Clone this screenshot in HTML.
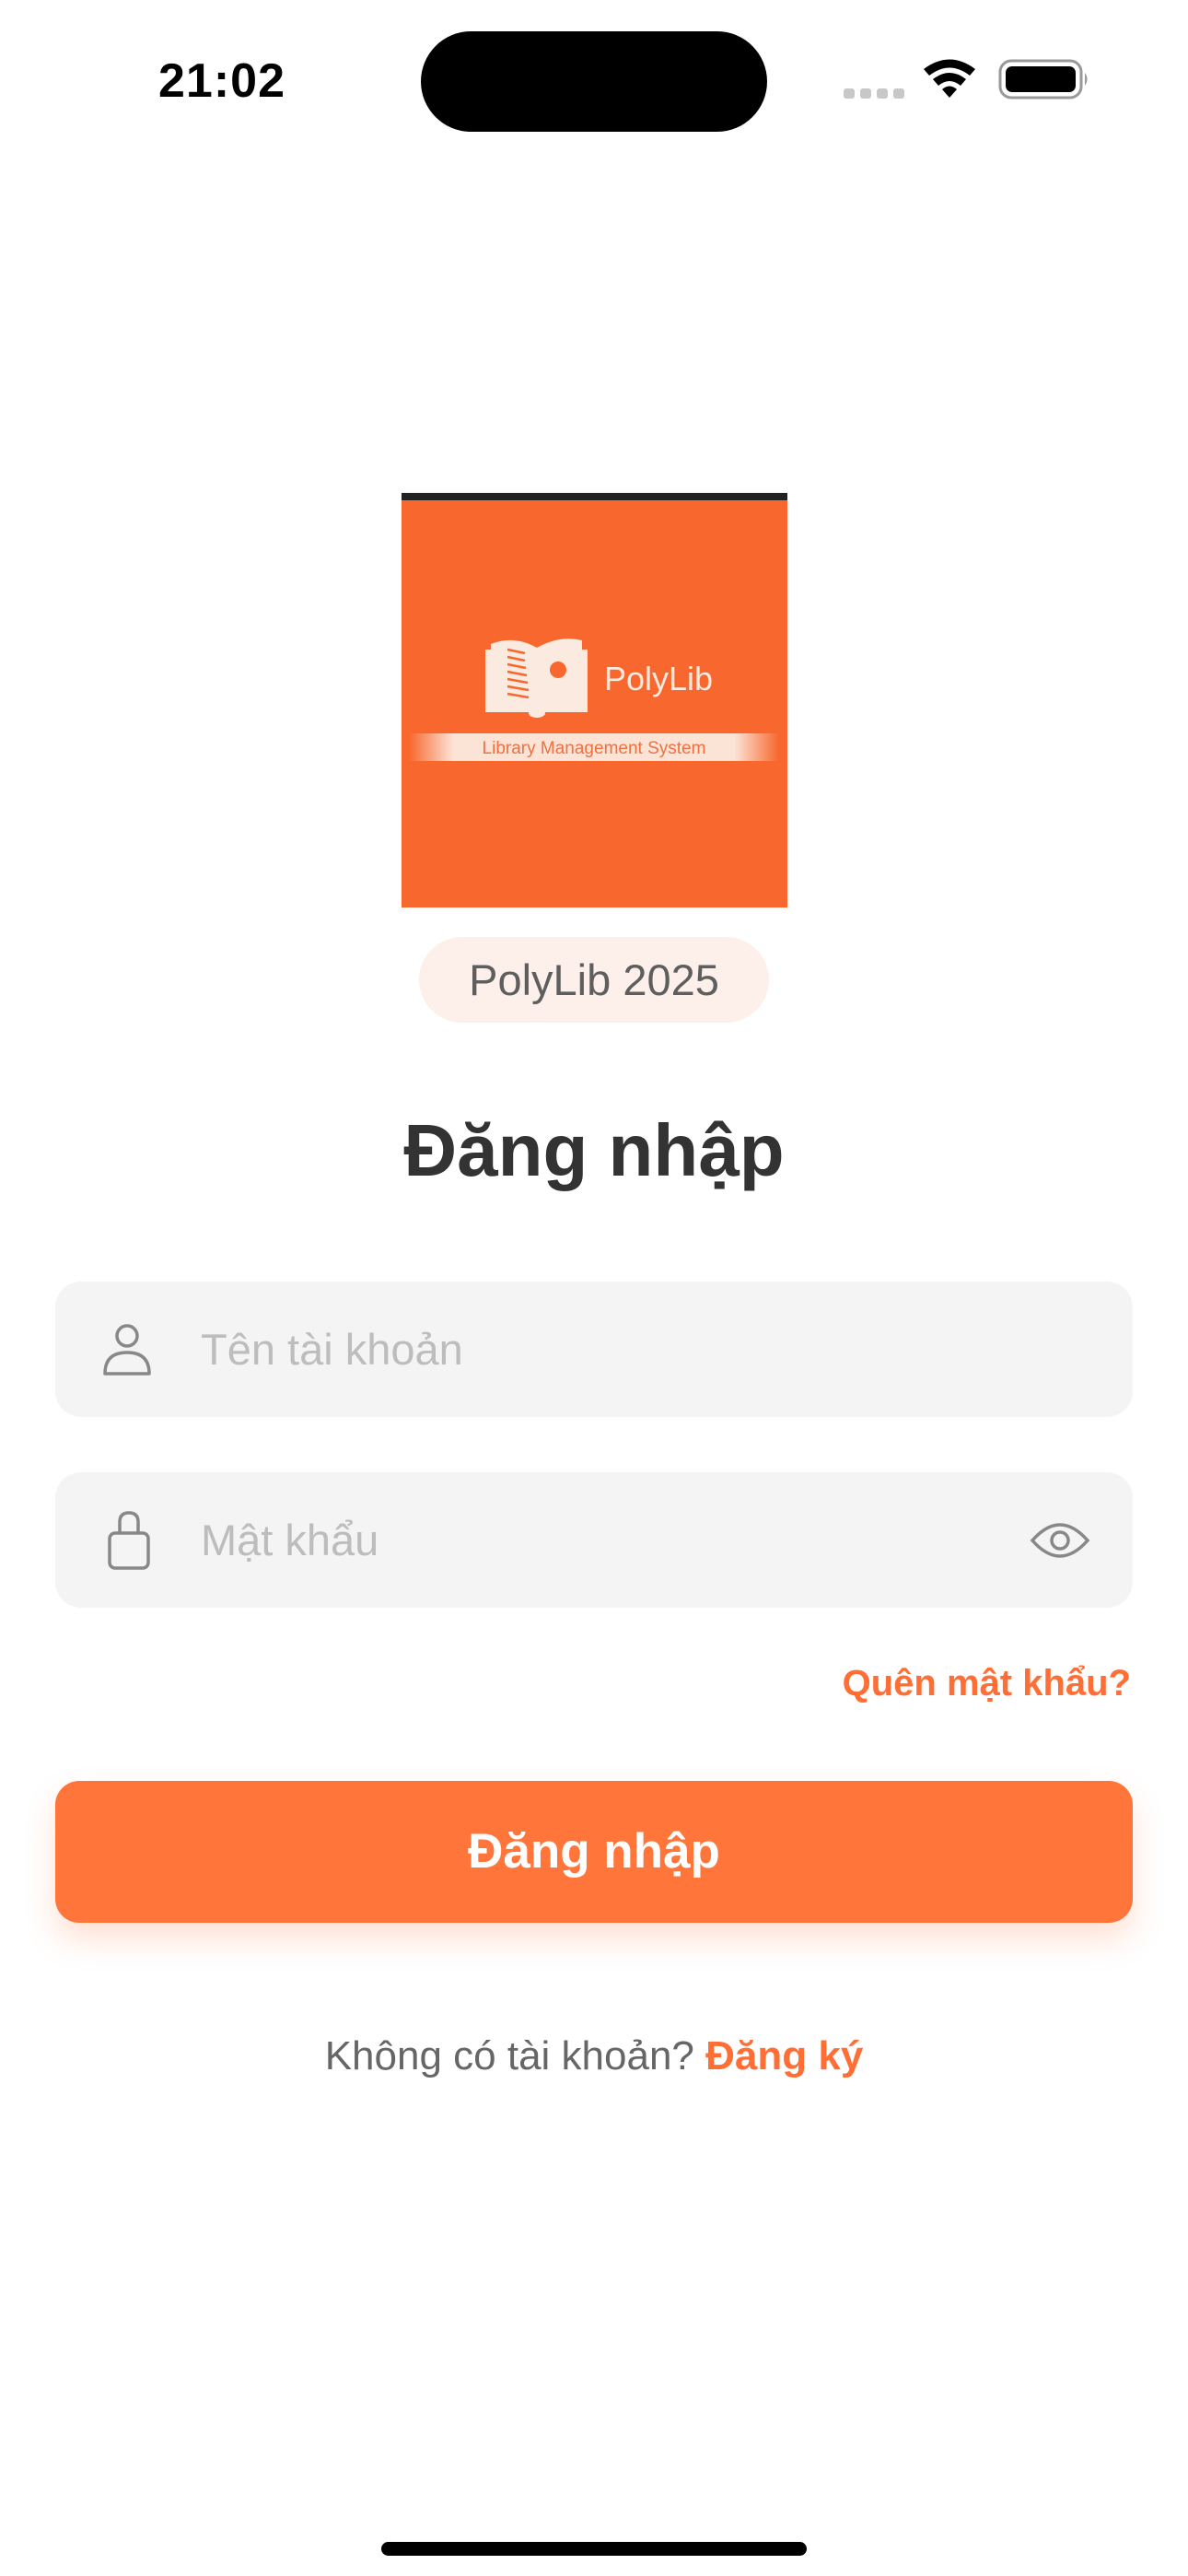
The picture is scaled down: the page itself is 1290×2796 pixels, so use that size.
<!DOCTYPE html>
<html><head><meta charset="utf-8"><style>
*{margin:0;padding:0;box-sizing:border-box}
body{width:1290px;height:2796px;background:#fff;position:relative;overflow:hidden;font-family:"Liberation Sans",sans-serif}
.abs{position:absolute}
.time{left:172px;top:58px;font-size:52px;font-weight:bold;color:#000;letter-spacing:1px}
.island{left:457px;top:34px;width:376px;height:109px;border-radius:55px;background:#000}
.logo{left:436px;top:535px;width:419px;height:450px;background:#f8672d;border-top:8px solid #222}
.pill{left:455px;top:1017px;width:380px;height:93px;border-radius:47px;background:#fdf0eb;color:#5e5e5e;font-size:47px;text-align:center;line-height:93px}
.title{left:0;width:1290px;top:1203px;text-align:center;font-size:80px;font-weight:bold;color:#333}
.inp{left:60px;width:1170px;height:147px;border-radius:28px;background:#f4f4f4}
.ph{position:absolute;left:158px;top:0;line-height:147px;font-size:47px;color:#bdbdbd}
.forgot{right:62px;top:1805px;font-size:40px;color:#ff6f35;font-weight:bold}
.btn{left:60px;top:1933px;width:1170px;height:154px;border-radius:26px;background:#ff753a;color:#fff;font-size:53px;font-weight:bold;text-align:center;line-height:154px;box-shadow:0 18px 34px rgba(255,117,58,0.22)}
.bottom{left:0;width:1290px;top:2207px;text-align:center;font-size:44px;color:#666}
.bottom b{color:#ff6f35}
.home{left:414px;top:2759px;width:462px;height:15px;border-radius:8px;background:#000}
</style></head><body>
<div class="abs time">21:02</div>
<div class="abs island"></div>
<svg class="abs" style="left:910px;top:60px" width="280" height="56" viewBox="0 0 280 56">
<g fill="#c8c8c8"><rect x="6" y="36" width="12" height="11" rx="3"/><rect x="24" y="36" width="12" height="11" rx="3"/><rect x="42" y="36" width="12" height="11" rx="3"/><rect x="60" y="36" width="12" height="11" rx="3"/></g>
<path d="M93 15 Q121 -6 149 15 L143 22 Q121 5 99 22 Z" fill="#000"/>
<path d="M103 26 Q121 12 139 26 L133 33 Q121 23 109 33 Z" fill="#000"/>
<path d="M113 37 Q121 30 129 37 L121 46 Z" fill="#000"/>
<rect x="176" y="6" width="88" height="40" rx="12" fill="none" stroke="#999" stroke-width="3"/>
<rect x="182" y="12" width="76" height="28" rx="7" fill="#000"/>
<path d="M268 19 Q273 26 268 33 Z" fill="#999"/>
</svg>
<div class="abs logo">
<svg width="419" height="442" viewBox="0 0 419 442">
<defs><linearGradient id="g" x1="0" x2="1"><stop offset="0" stop-color="#fbe3d6" stop-opacity="0"/><stop offset="0.12" stop-color="#fbe3d6"/><stop offset="0.88" stop-color="#fbe3d6"/><stop offset="1" stop-color="#fbe3d6" stop-opacity="0"/></linearGradient></defs>
<g fill="#fbeadf">
<rect x="91" y="162" width="6" height="68"/><rect x="196" y="162" width="6" height="68"/>
<path d="M97 230 L97 156 Q122 146 147 160 L147 228 Q122 218 97 230Z"/>
<path d="M147 160 Q172 146 196 152 L196 226 Q172 220 147 228Z"/>
<rect x="91" y="223" width="111" height="7"/>
<ellipse cx="147" cy="231" rx="9" ry="5"/>
</g>
<g stroke="#f8672d" stroke-width="2.5" fill="none"><path d="M115 162 L134 166 M115 170 L134 174 M115 178 L135 182 M115 186 L136 190 M115 194 L137 198 M115 202 L138 206 M115 210 L138 214"/></g>
<circle cx="170" cy="184" r="9" fill="#f8672d"/>
<text x="220" y="206" font-family="Liberation Sans Narrow,Liberation Sans,sans-serif" font-size="36" fill="#fbeadf">PolyLib</text>
<rect x="8" y="253" width="402" height="30" fill="url(#g)"/>
<text x="209" y="275" text-anchor="middle" font-family="Liberation Sans Narrow,Liberation Sans,sans-serif" font-size="19" fill="#f07040">Library Management System</text>
</svg>
</div>
<div class="abs pill">PolyLib 2025</div>
<div class="abs title">Đăng nhập</div>
<div class="abs inp" style="top:1391px">
<svg class="abs" style="left:50px;top:42px" width="56" height="64" viewBox="0 0 56 64"><circle cx="28" cy="17" r="11" fill="none" stroke="#888" stroke-width="3.5"/><path d="M4 58 Q4 35 28 35 Q52 35 52 58 Z" fill="none" stroke="#888" stroke-width="3.5" stroke-linejoin="round"/></svg>
<div class="ph">Tên tài khoản</div>
</div>
<div class="abs inp" style="top:1598px">
<svg class="abs" style="left:55px;top:40px" width="50" height="70" viewBox="0 0 50 70"><path d="M15 26 V14 Q15 4 25 4 Q35 4 35 14 V26" fill="none" stroke="#888" stroke-width="3.5"/><rect x="4" y="26" width="42" height="38" rx="6" fill="none" stroke="#888" stroke-width="3.5"/></svg>
<div class="ph">Mật khẩu</div>
<svg class="abs" style="left:1058px;top:52px" width="66" height="44" viewBox="0 0 66 44"><path d="M3 22 Q33 -12 63 22 Q33 56 3 22Z" fill="none" stroke="#888" stroke-width="3.5"/><circle cx="33" cy="22" r="9" fill="none" stroke="#888" stroke-width="3.5"/></svg>
</div>
<div class="abs forgot">Quên mật khẩu?</div>
<div class="abs btn">Đăng nhập</div>
<div class="abs bottom">Không có tài khoản? <b>Đăng ký</b></div>
<div class="abs home"></div>
</body></html>
